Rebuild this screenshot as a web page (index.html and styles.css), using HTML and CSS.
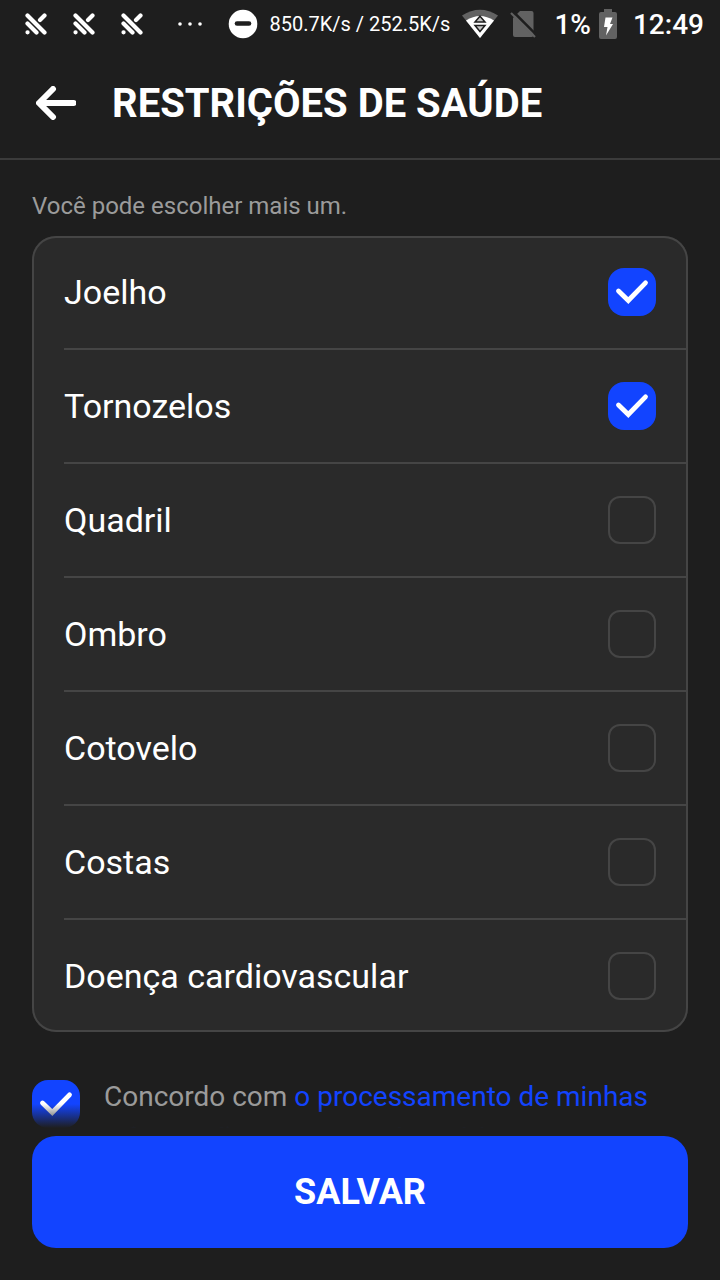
FILE: index.html
```html
<!DOCTYPE html>
<html lang="pt-BR">
<head>
<meta charset="utf-8">
<meta name="viewport" content="width=device-width, initial-scale=1">
<title>Restrições de saúde</title>
<link rel="stylesheet" href="styles.css">
</head>
<body>
<svg class="defs" aria-hidden="true">
  <symbol id="tick" viewBox="0 0 48 48"><path d="M10.500 23 20.300 32.500 37.500 14.800" fill="none" stroke="currentColor" stroke-width="4.800" stroke-linecap="round"/></symbol>
  <symbol id="notice" viewBox="0 0 22 22"><path d="M2.500 2.500 19.500 19.500M15 7 19.500 2.500M2.500 10.500 11.500 19.500M2.500 19.300h.1" fill="none" stroke="currentColor" stroke-width="4.200" stroke-linecap="round"/></symbol>
</svg>
<div class="screen">
  <div class="status">
    <div class="status-notices">
      <svg class="notice"><use href="#notice"/></svg>
      <svg class="notice"><use href="#notice"/></svg>
      <svg class="notice"><use href="#notice"/></svg>
      <svg class="more" viewBox="0 0 26 6" fill="currentColor"><circle cx="3" cy="3" r="1.8"/><circle cx="13" cy="3" r="1.8"/><circle cx="23" cy="3" r="1.8"/></svg>
    </div>
    <div class="status-info">
      <svg class="dnd" viewBox="0 0 30 30"><circle cx="15" cy="15" r="14.3" fill="currentColor"/><path d="M9 14.5h12" stroke="#1e1e1e" stroke-width="4.6" stroke-linecap="round"/></svg>
      <span class="speed">850.7K/s / 252.5K/s</span>
      <svg class="wifi" viewBox="0 0 36 30"><path d="M0 6.500Q18-5 36 6.500L18 29Z" fill="#626262"/><path d="M4 11.500Q18 2.500 32 11.500L18 29Z" fill="currentColor"/><path d="M18 7.200 23 13H13ZM18 22.500 23 16.500H13Z" fill="#c4c4c4" stroke="#1e1e1e" stroke-width="1.500"/></svg>
      <svg class="sim" viewBox="0 0 26 28"><path d="M10 1h11.500a2 2 0 0 1 2 2v22a2 2 0 0 1-2 2H5a2 2 0 0 1-2-2V8Z" fill="#626262"/><path d="M3 1.500 27 25.500" stroke="#1e1e1e" stroke-width="2.600"/><path d="M1 3 25 27" stroke="#626262" stroke-width="2.200"/></svg>
      <div class="power">
        <span class="percent">1%</span>
        <svg class="battery" viewBox="0 0 18 30"><path d="M5 0h8v3h3a2 2 0 0 1 2 2v23a2 2 0 0 1-2 2H2a2 2 0 0 1-2-2V5a2 2 0 0 1 2-2h3Z" fill="#626262"/><path d="M6.500 8.500h7L11 15h3L7 26.500 8.500 18H5Z" fill="currentColor"/></svg>
      </div>
      <time class="clock">12:49</time>
    </div>
  </div>
  <header class="header">
    <button class="back" type="button" aria-label="Voltar">
      <svg class="back-icon" viewBox="0 0 40 34"><path d="M17 3 3 17 17 31M3.500 17H37.500" fill="none" stroke="currentColor" stroke-width="6" stroke-linecap="round" stroke-linejoin="round"/></svg>
    </button>
    <h1 class="title">RESTRIÇÕES DE SAÚDE</h1>
  </header>
  <main class="content">
    <p class="hint">Você pode escolher mais um.</p>
    <div class="card">
      <label class="option"><span>Joelho</span><span class="check"><input type="checkbox" checked><svg class="tick"><use href="#tick"/></svg></span></label>
      <label class="option"><span>Tornozelos</span><span class="check"><input type="checkbox" checked><svg class="tick"><use href="#tick"/></svg></span></label>
      <label class="option"><span>Quadril</span><span class="check"><input type="checkbox"><svg class="tick"><use href="#tick"/></svg></span></label>
      <label class="option"><span>Ombro</span><span class="check"><input type="checkbox"><svg class="tick"><use href="#tick"/></svg></span></label>
      <label class="option"><span>Cotovelo</span><span class="check"><input type="checkbox"><svg class="tick"><use href="#tick"/></svg></span></label>
      <label class="option"><span>Costas</span><span class="check"><input type="checkbox"><svg class="tick"><use href="#tick"/></svg></span></label>
      <label class="option"><span>Doença cardiovascular</span><span class="check"><input type="checkbox"><svg class="tick"><use href="#tick"/></svg></span></label>
    </div>
    <div class="consent">
      <div class="consent-check"><span class="check"><input type="checkbox" id="consent" checked><svg class="tick"><use href="#tick"/></svg></span></div>
      <label class="consent-text" for="consent">Concordo com <a href="#consent">o processamento de minhas informações pessoais de saúde</a></label>
    </div>
  </main>
  <footer class="footer">
    <button class="save" type="button">SALVAR</button>
  </footer>
</div>
</body>
</html>
```
FILE: styles.css
```css
* {
  box-sizing: border-box;
}

body {
  margin: 0;
  background: #1e1e1e;
  color: #fff;
  font-family: Roboto, "Noto Sans", sans-serif;
}

.defs {
  display: none;
}

.screen {
  display: flex;
  flex-direction: column;
  height: 100vh;
}

.status {
  display: flex;
  flex: none;
  align-items: center;
  justify-content: space-between;
  height: 48px;
  padding: 0 16px 0 25px;
}

.status-notices,
.status-info,
.power {
  display: flex;
  align-items: center;
}

.status-notices {
  gap: 26px;
}

.status-info {
  gap: 12px;
}

.power {
  gap: 8px;
  margin-left: 6px;
}

.notice {
  width: 22px;
  height: 22px;
}

.more {
  width: 26px;
  height: 6px;
  margin-left: 8px;
}

.dnd {
  width: 30px;
  height: 30px;
}

.speed {
  font-size: 20px;
}

.wifi {
  width: 36px;
  height: 30px;
}

.sim {
  width: 26px;
  height: 28px;
}

.percent,
.clock {
  font-size: 28px;
  font-weight: 500;
}

.battery {
  width: 18px;
  height: 30px;
}

.clock {
  margin-left: 4px;
}

.header {
  display: flex;
  flex: none;
  align-items: center;
  gap: 36px;
  height: 112px;
  padding: 0 36px;
  border-bottom: 2px solid #3b3b3b;
}

.back {
  display: flex;
  padding: 0;
  border: 0;
  background: none;
  color: inherit;
}

.back-icon {
  width: 40px;
  height: 34px;
}

.title {
  margin: 0;
  font-size: 40px;
  font-weight: 700;
}

.content {
  flex: 1;
  min-height: 0;
  padding: 32px 32px 0;
  overflow: hidden;
}

.hint {
  margin: 0 0 16px;
  color: #9b9b9b;
  font-size: 24px;
  line-height: 28px;
}

.card {
  padding-left: 32px;
  border-radius: 24px;
  background: #2a2a2a;
  box-shadow: inset 0 0 0 2px #454545;
}

.option {
  display: flex;
  align-items: center;
  justify-content: space-between;
  padding: 32px 32px 32px 0;
  font-size: 34px;
  line-height: 48px;
}

.option + .option {
  border-top: 2px solid #454545;
}

.check {
  display: grid;
  flex: none;
  width: 48px;
  height: 48px;
}

.check input {
  grid-area: 1 / 1;
  width: 48px;
  height: 48px;
  margin: 0;
  border: 2px solid #454545;
  border-radius: 12px;
  appearance: none;
}

.check input:checked {
  border: 0;
  border-radius: 16px;
  background: #1244ff;
}

.tick {
  grid-area: 1 / 1;
  width: 48px;
  height: 48px;
  pointer-events: none;
  visibility: hidden;
}

.check input:checked + .tick {
  visibility: visible;
}

.consent {
  display: flex;
  gap: 24px;
  padding-top: 44px;
}

.consent-check {
  padding-top: 4px;
}

.consent-text {
  color: #9b9b9b;
  font-size: 28px;
  line-height: 42px;
}

.consent-text a {
  color: #1244ff;
  text-decoration: none;
}

.footer {
  position: relative;
  flex: none;
  padding: 8px 32px 32px;
  background: #1e1e1e;
}

/* Fades the scrolled content out above the save button */
.footer::before {
  content: "";
  position: absolute;
  right: 0;
  bottom: 100%;
  left: 0;
  height: 24px;
  background: linear-gradient(rgba(30, 30, 30, 0), #1e1e1e);
  pointer-events: none;
}

.save {
  width: 100%;
  height: 112px;
  border: 0;
  border-radius: 24px;
  background: #1244ff;
  color: inherit;
  font-family: inherit;
  font-size: 36px;
  font-weight: 700;
}
```
